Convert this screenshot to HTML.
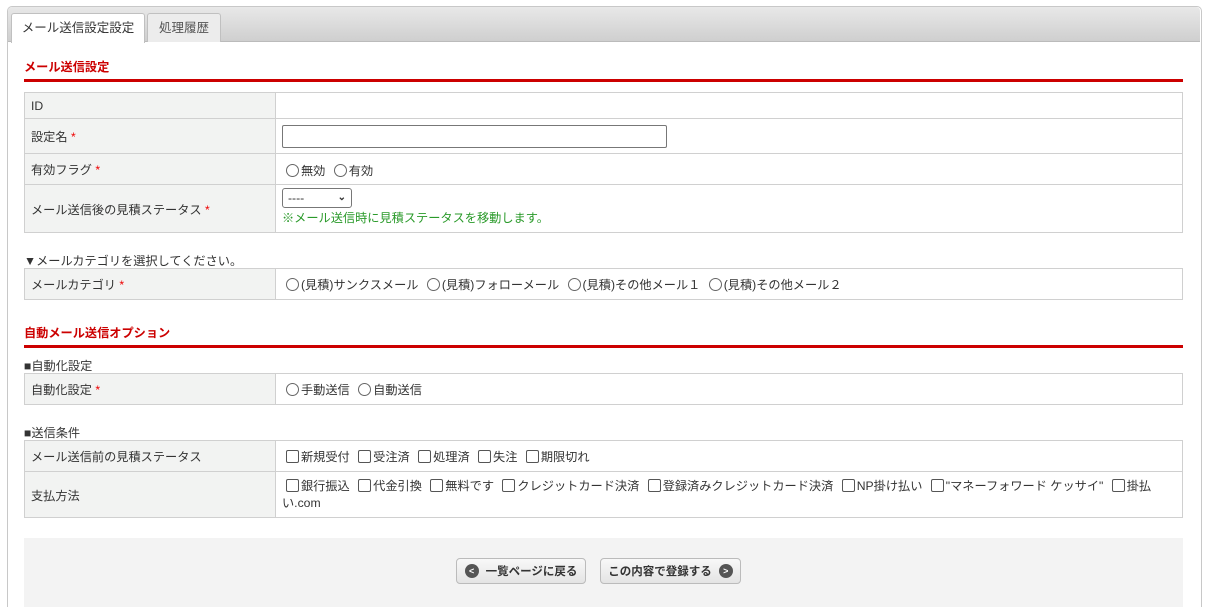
<!DOCTYPE html>
<html><head><meta charset="utf-8"><style>
html,body{margin:0;overflow:hidden;height:607px}
body{background:#fff;font-family:"Liberation Sans","Noto Sans CJK JP",sans-serif;font-size:12.2px;color:#333;width:1209px;position:relative}
.abs{position:absolute}
.panel{left:7px;top:6px;width:1193px;height:600px;border:1px solid #c8c8c8;border-bottom:none;border-radius:5px 5px 0 0}
.tabbar{left:8px;top:7px;width:1192px;height:34px;background:linear-gradient(#e8e8e8,#cfcfcf);border-radius:4px 4px 0 0;border-bottom:1px solid #bbb}
.tab{top:13px;height:28px;line-height:28px;text-align:center;border:1px solid #c0c0c0;border-bottom:none;border-radius:3px 3px 0 0;font-size:12.5px}
h2{position:absolute;left:24px;margin:0;font-size:12.2px;color:#c00;font-weight:bold}
.line{left:24px;width:1159px;height:3px;background:#c00}
table{position:absolute;left:24px;width:1159px;border-collapse:collapse}
td{border:1px solid #d0d0d0;padding:0 6px;vertical-align:middle}
td.l{width:238px;background:#f2f3f2}
.req{color:#e00}
.rad{display:inline-block;width:11px;height:11px;border:1px solid #666;border-radius:50%;vertical-align:-2px;margin:0 2px 0 5px;background:#fff}
.chk{display:inline-block;width:11px;height:11px;border:1px solid #555;border-radius:2px;vertical-align:-2px;margin:0 2px 0 5px;background:#fff}
.note{left:24px}
.btn{top:558px;height:26px;border:1px solid #bbb;border-radius:4px;background:linear-gradient(#f8f8f8,#e4e4e4);font-size:11.5px;font-weight:bold;color:#333;box-sizing:border-box;display:flex;align-items:center;justify-content:center;gap:7px}
.ic{display:inline-block;width:14px;height:14px;border-radius:50%;background:#555;color:#fff;font-size:9px;line-height:14px;text-align:center}
</style></head><body>
<div class="abs panel"></div>
<div class="abs tabbar"></div>
<div class="abs tab" style="left:11px;width:132px;background:#fff;height:29px">メール送信設定設定</div>
<div class="abs tab" style="left:147px;width:72px;background:#ececec;color:#555">処理履歴</div>

<h2 style="top:57px">メール送信設定</h2>
<div class="abs line" style="top:79px"></div>
<table style="top:92px">
<tr style="height:26px"><td class="l">ID</td><td></td></tr>
<tr style="height:35px"><td class="l">設定名 <span class="req">*</span></td><td><div style="width:383px;height:21px;border:1px solid #777;border-radius:2px;margin-top:0px"></div></td></tr>
<tr style="height:31px"><td class="l">有効フラグ <span class="req">*</span></td><td style="padding-top:2px"><span class="rad" style="margin-left:4px"></span>無効 <span class="rad"></span>有効</td></tr>
<tr style="height:48px"><td class="l">メール送信後の見積ステータス <span class="req">*</span></td><td><div style="width:70px;height:20px;border:1px solid #777;border-radius:3px;position:relative;line-height:18px;box-sizing:border-box;padding-left:5px;margin-top:-4px">----<span style="position:absolute;right:5px;top:0;font-size:10px;font-weight:bold">&#x2304;</span></div><div style="color:#2a9a2a;margin-top:0px">※メール送信時に見積ステータスを移動します。</div></td></tr>
</table>
<div class="abs note" style="top:251px">▼メールカテゴリを選択してください。</div>
<table style="top:268px">
<tr style="height:31px"><td class="l">メールカテゴリ <span class="req">*</span></td><td style="padding-top:0px"><span class="rad" style="margin-left:4px"></span>(見積)サンクスメール <span class="rad"></span>(見積)フォローメール <span class="rad"></span>(見積)その他メール１ <span class="rad"></span>(見積)その他メール２</td></tr>
</table>

<h2 style="top:323px">自動メール送信オプション</h2>
<div class="abs line" style="top:345px"></div>
<div class="abs note" style="top:356px">■自動化設定</div>
<table style="top:373px">
<tr style="height:31px"><td class="l">自動化設定 <span class="req">*</span></td><td style="padding-top:0px"><span class="rad" style="margin-left:4px"></span>手動送信 <span class="rad"></span>自動送信</td></tr>
</table>
<div class="abs note" style="top:423px">■送信条件</div>
<table style="top:440px">
<tr style="height:31px"><td class="l">メール送信前の見積ステータス</td><td style="padding-top:0px"><span class="chk" style="margin-left:4px"></span>新規受付 <span class="chk"></span>受注済 <span class="chk"></span>処理済 <span class="chk"></span>失注 <span class="chk"></span>期限切れ</td></tr>
<tr style="height:46px"><td class="l">支払方法</td><td style="line-height:17px;padding-top:0px"><span class="chk" style="margin-left:4px"></span>銀行振込 <span class="chk"></span>代金引換 <span class="chk"></span>無料です <span class="chk"></span>クレジットカード決済 <span class="chk"></span>登録済みクレジットカード決済 <span class="chk"></span>NP掛け払い <span class="chk"></span>"マネーフォワード ケッサイ" <span class="chk"></span>掛払い.com</td></tr>
</table>

<div class="abs" style="left:24px;top:538px;width:1159px;height:69px;background:#f3f3f3"></div>
<div class="abs btn" style="left:456px;width:130px"><span class="ic">&lt;</span>一覧ページに戻る</div>
<div class="abs btn" style="left:600px;width:141px">この内容で登録する<span class="ic">&gt;</span></div>
</body></html>
